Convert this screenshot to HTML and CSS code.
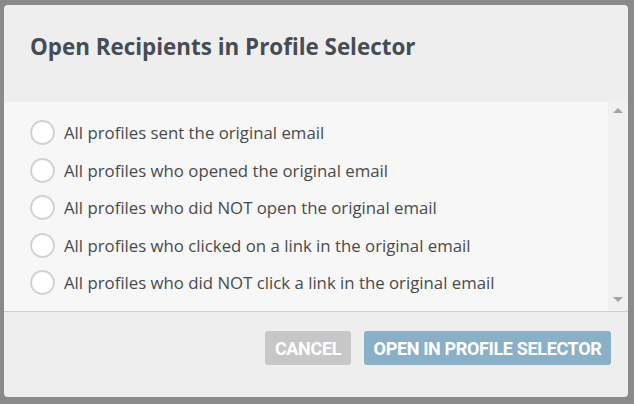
FILE: index.html
```html
<!DOCTYPE html>
<html>
<head>
<meta charset="utf-8">
<link rel="stylesheet" href="styles.css">
</head>
<body>
<div class="overlay">
  <div class="dialog">
    <div class="header">
      <h1 class="title">Open Recipients in Profile Selector</h1>
    </div>
    <div class="body">
      <ul class="options">
        <li class="option"><span class="radio"></span><span class="label">All profiles sent the original email</span></li>
        <li class="option"><span class="radio"></span><span class="label">All profiles who opened the original email</span></li>
        <li class="option"><span class="radio"></span><span class="label">All profiles who did NOT open the original email</span></li>
        <li class="option"><span class="radio"></span><span class="label">All profiles who clicked on a link in the original email</span></li>
        <li class="option"><span class="radio"></span><span class="label">All profiles who did NOT click a link in the original email</span></li>
      </ul>
      <div class="scrollbar">
        <span class="arrow up"></span>
        <span class="arrow down"></span>
      </div>
    </div>
    <div class="footer">
      <button class="btn cancel">Cancel</button>
      <button class="btn primary">Open in Profile Selector</button>
    </div>
  </div>
</div>
</body>
</html>
```
FILE: styles.css
```css
html, body {
  margin: 0;
  padding: 0;
  width: 634px;
  height: 404px;
  overflow: hidden;
}
.overlay {
  width: 634px;
  height: 404px;
  background: #8a8a8a;
  padding: 5px 6px 7px 4px;
  box-sizing: border-box;
}
.dialog {
  width: 624px;
  height: 392px;
  border-radius: 4px;
  overflow: hidden;
  background: #eeeeee;
  display: flex;
  flex-direction: column;
}
.header {
  height: 97px;
  flex: none;
  padding: 0 26px;
  display: flex;
  align-items: center;
  box-sizing: border-box;
}
.title {
  margin: 0 0 14px 0;
  font-family: "Open Sans", sans-serif;
  font-weight: 700;
  font-size: 22.4px;
  color: #464c54;
}
.body {
  height: 210px;
  flex: none;
  background: #f7f7f7;
  border-bottom: 1px solid #cfcfcf;
  display: flex;
  box-sizing: border-box;
}
.options {
  list-style: none;
  margin: 0;
  padding: 12px 0 0 26px;
  flex: 1;
}
.option {
  height: 37.5px;
  display: flex;
  align-items: center;
  gap: 9px;
}
.radio {
  width: 21px;
  height: 21px;
  border: 2px solid #cfd3d8;
  border-radius: 50%;
  background: #fff;
  flex: none;
}
.label {
  font-family: "Open Sans", sans-serif;
  font-size: 16.8px;
  color: #4a4a4a;
}
.scrollbar {
  width: 20px;
  flex: none;
  background: #f0f0f0;
  position: relative;
}
.arrow {
  position: absolute;
  left: 5px;
  width: 0;
  height: 0;
  border-left: 5px solid transparent;
  border-right: 5px solid transparent;
}
.arrow.up {
  top: 6px;
  border-bottom: 5px solid #a3a3a3;
}
.arrow.down {
  bottom: 9px;
  border-top: 5px solid #a3a3a3;
}
.footer {
  flex: 1;
  display: flex;
  justify-content: flex-end;
  align-items: flex-start;
  gap: 13px;
  padding: 19px 17px 0 0;
}
.btn {
  height: 34px;
  border: none;
  border-radius: 3px;
  font-family: Roboto, sans-serif;
  font-weight: 700;
  font-size: 18px;
  text-transform: uppercase;
  color: #ffffff;
  padding: 0;
  letter-spacing: -0.35px;
}
.cancel {
  width: 86px;
  background: #c7c7c7;
}
.primary {
  width: 247px;
  background: #8ab0c8;
}
```
